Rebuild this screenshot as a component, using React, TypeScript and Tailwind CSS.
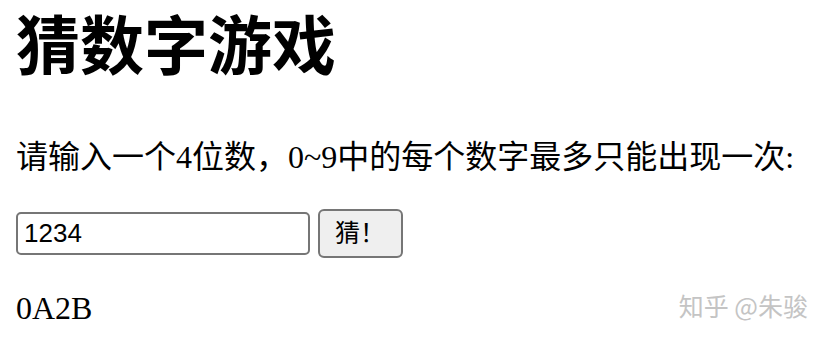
import * as React from "react"

export default function App() {
    const [guess, setGuess] = React.useState("1234")

    return (
        <main className="relative h-[340px] w-[828px] overflow-hidden bg-white px-4 pt-4 text-black [font-family:'Liberation_Serif','Noto_Sans_CJK_SC',serif]">
            <h1 className="text-[64px] leading-none font-bold">猜数字游戏</h1>
            <p className="mt-[61px] text-[32px] leading-none">请输入一个4位数，0~9中的每个数字最多只能出现一次:</p>
            <div className="mt-[36px] flex items-center gap-2">
                <input
                    type="text"
                    value={guess}
                    onChange={e => setGuess(e.target.value)}
                    className="h-[43px] w-[294px] rounded-[5px] border-2 border-[#767676] px-[6px] text-[26px] leading-none [font-family:'Liberation_Sans','Noto_Sans_CJK_SC',sans-serif] focus:outline-none"
                />
                <button
                    type="button"
                    className="h-[49px] w-[85px] rounded-[6px] border-2 border-[#767676] bg-[#efefef] pl-[15px] text-left text-[25px] leading-none [font-family:'Liberation_Sans','Noto_Sans_CJK_SC',sans-serif]"
                >
                    猜！
                </button>
            </div>
            <div className="mt-[34px] text-[32px] leading-none">0A2B</div>
            <div className="absolute right-[20px] top-[293px] text-[25px] leading-none text-[#c4c4c4] [font-family:'Noto_Sans_CJK_SC',sans-serif]">
                知乎 @朱骏
            </div>
        </main>
    )
}
